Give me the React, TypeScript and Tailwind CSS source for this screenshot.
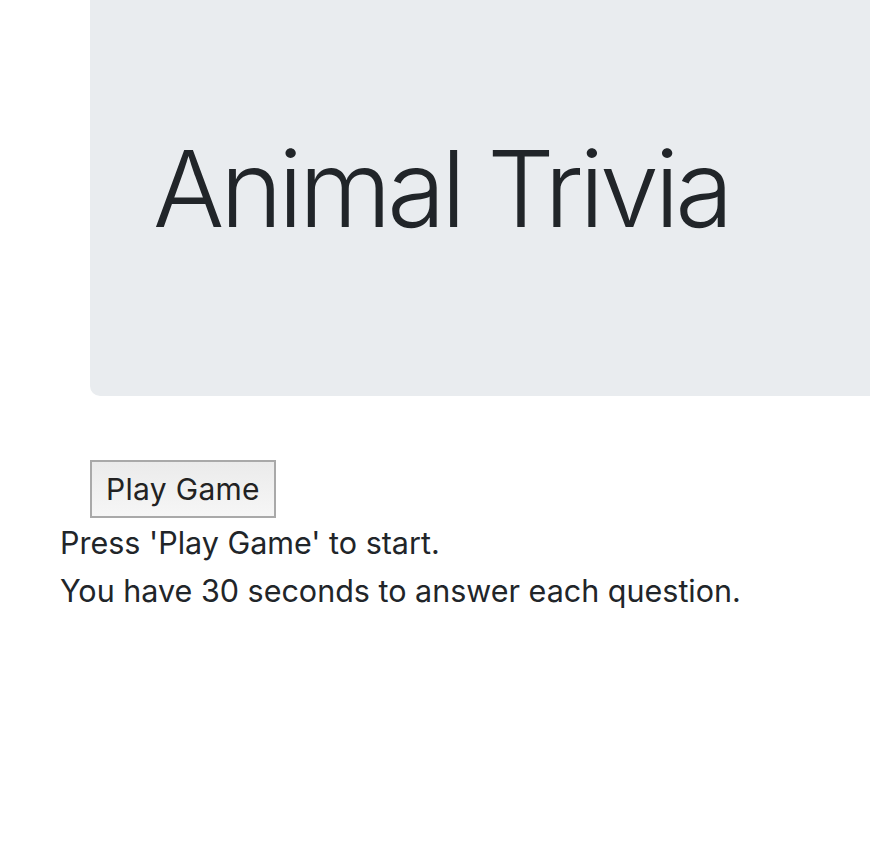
import React from "react";

export default function App() {
  return (
    <div className="w-[870px] h-[850px] overflow-hidden bg-white text-[#212529]" style={{ fontFamily: "Inter, 'Liberation Sans', sans-serif" }}>
      <div className="ml-[90px] w-[820px] h-[396px] bg-[#e9ecef] rounded-b-[10px] flex items-center pl-[63px] pb-[18px]">
        <h1 className="text-[106px] font-light leading-none tracking-[-4.2px]">Animal Trivia</h1>
      </div>
      <div className="mt-[64px] ml-[90px]">
        <button className="h-[58px] w-[186px] border-2 border-[#a9a9a9] bg-gradient-to-b from-[#ebebeb] to-[#f6f6f6] text-[30px] text-[#222] tracking-[0.3px]">Play Game</button>
      </div>
      <div className="ml-[60px] text-[30.5px] leading-[48px] mt-[1px]">
        <p>Press 'Play Game' to start.</p>
        <p>You have 30 seconds to answer each question.</p>
      </div>
    </div>
  );
}
